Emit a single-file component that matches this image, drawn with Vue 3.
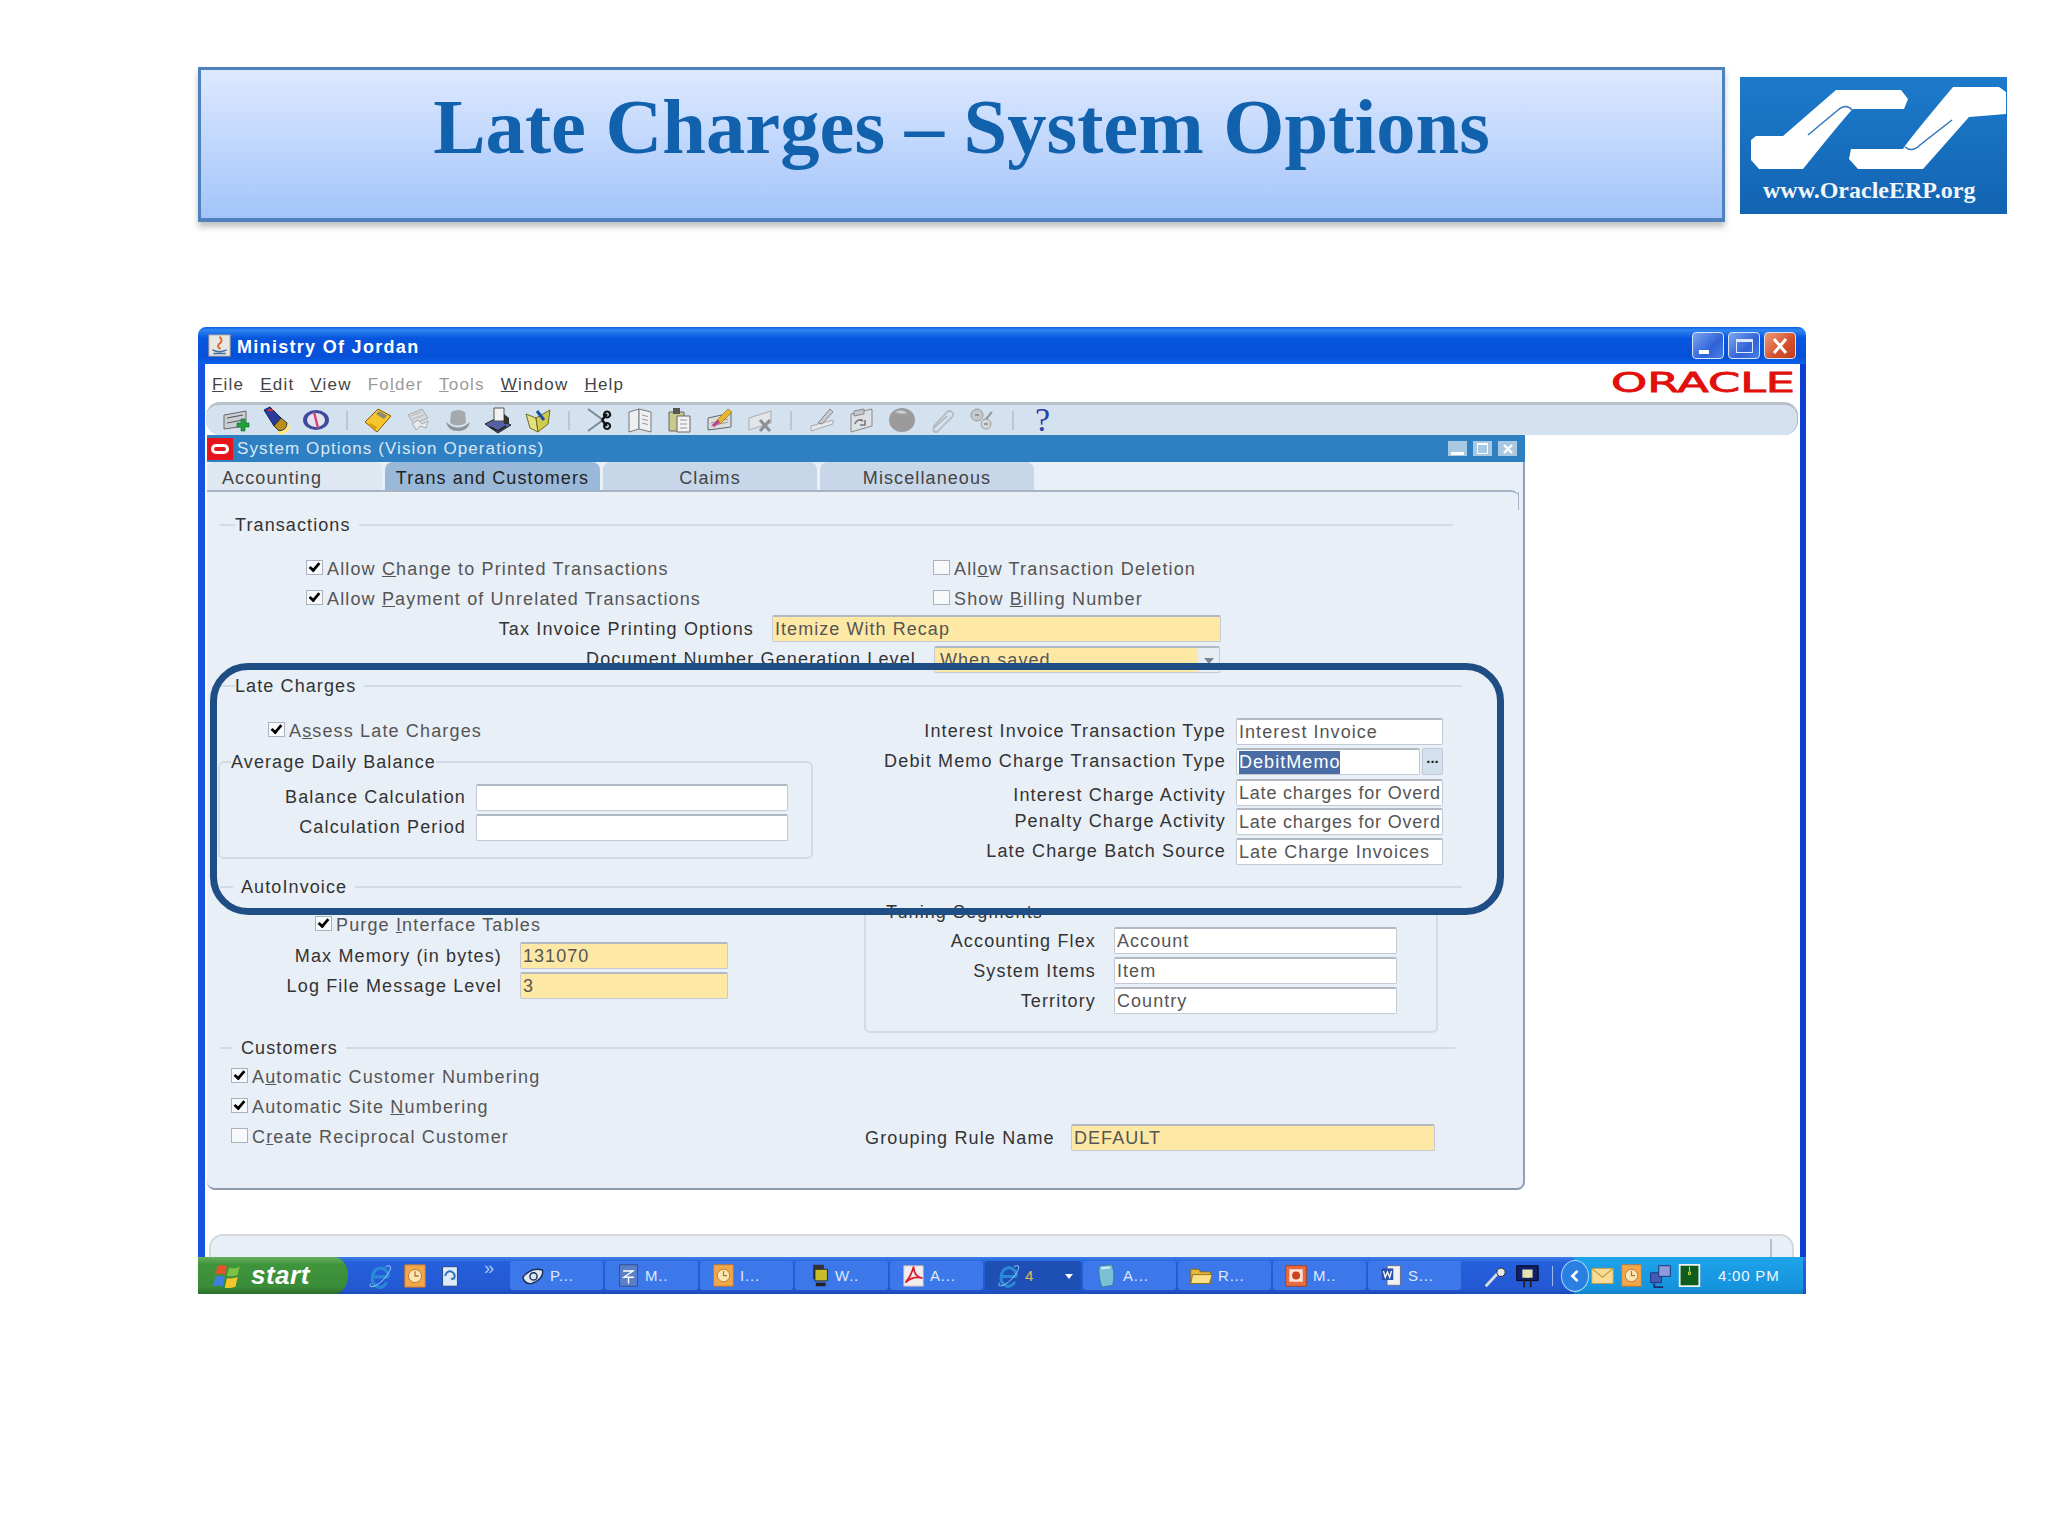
<script setup>
const icons = {
  add: [
    { d: 'M2 9L24 5V20L2 23Z', f: '#c9ced4', s: '#666' },
    { d: 'M5 12L21 9M5 17L21 14', s: '#555' },
    { d: 'M19 13h4v4h4v4h-4v4h-4v-4h-4v-4h4z', f: '#1fa33c', s: '#0c6a22', w: 0.6 },
  ],
  flash: [
    { d: 'M2 4L8 1L19 12L12 20Z', f: '#2a3c98', s: '#15205c' },
    { d: 'M6 4L11 4', s: '#c33', w: 2 },
    { d: 'M12 20L19 12L25 17Q25 24 17 25Z', f: '#b98f1a', s: '#333' },
    { d: 'M16 27Q25 27 27 19', s: '#ffe97a', w: 3 },
  ],
  compass: [
    { d: 'M1 14a13 10 0 1 0 26 0a13 10 0 1 0 -26 0Z', f: '#3d4a9e' },
    { d: 'M5 14a9 7 0 1 0 18 0a9 7 0 1 0 -18 0Z', f: '#e7e3ee' },
    { d: 'M12 6L16 22', s: '#d0457a', w: 2.5 },
  ],
  save: [
    { d: 'M1 16L14 3L27 10L13 26Z', f: '#f7c52e', s: '#7a5a08' },
    { d: 'M15 5L23 9.5L20 13L12 8Z', f: '#8f8a72' },
    { d: 'M6 17L13 21L11 24L4 19Z', f: '#d79b12' },
  ],
  star: [
    { d: 'M4 9L18 3L24 12L10 18Z', f: '#d5d8dc', s: '#aaa' },
    { d: 'M8 18L14 14L18 18L24 15L22 22L16 20L12 24L10 20Z', f: '#e8eaec', s: '#aaa' },
    { d: 'M7 10L17 6M9 13L20 9', s: '#b5b8bc' },
  ],
  hat: [
    { d: 'M7 6Q14 2 21 6L22 17Q14 22 6 17Z', f: '#a5a8ac' },
    { d: 'M2 16Q14 27 26 16Q24 25 14 25Q4 25 2 16Z', f: '#8f9296' },
  ],
  printer: [
    { d: 'M1 18L13 12L27 19L14 27Z', f: '#5660a8', s: '#222' },
    { d: 'M10 2H20V15H10Z', f: '#f2f2f2', s: '#555' },
    { d: 'M20 8L25 12V18H20Z', f: '#333' },
    { d: 'M6 21L14 25L22 20', s: '#222', w: 1.5 },
  ],
  folder: [
    { d: 'M2 8L12 12L14 26L6 22Z', f: '#e5e07f', s: '#6b6a20' },
    { d: 'M12 12L26 4L24 18L14 26Z', f: '#cfcb4e', s: '#6b6a20' },
    { d: 'M13 5L20 14', s: '#1d4fa0', w: 3 },
  ],
  scissors: [
    { d: 'M2 3L17 14M2 25L17 14', s: '#7d8892', w: 2 },
    { d: 'M16 14L21 8M16 14L21 20', s: '#111', w: 2.5 },
    { d: 'M21 5.500a3 3 0 1 0 .1 0ZM21 17a3 3 0 1 0 .1 0Z', s: '#111', w: 2.2 },
  ],
  copy: [
    { d: 'M3 6L13 3V23L3 26Z', f: '#eef0f2', s: '#777' },
    { d: 'M13 3L25 6V26L13 23Z', f: '#eef0f2', s: '#777' },
    { d: 'M16 9L22 10.500M16 13L22 14.500M16 17L22 18.500', s: '#999' },
  ],
  paste: [
    { d: 'M3 6H18V25H3Z', f: '#c9c98a', s: '#666' },
    { d: 'M7 2H14V8H7Z', f: '#555' },
    { d: 'M11 10H24V26H11Z', f: '#f3f3f3', s: '#666' },
    { d: 'M14 14H21M14 18H21M14 22H21', s: '#999' },
  ],
  clear: [
    { d: 'M2 12L25 7V21L2 24Z', f: '#ddd', s: '#666' },
    { d: 'M5 17L22 13M5 20L22 16', s: '#999' },
    { d: 'M10 15L22 3L26 6L14 18Z', f: '#e6b72b', s: '#8a6a10', w: 0.6 },
    { d: 'M7 20L13 15', s: '#c0408a', w: 3 },
  ],
  remove: [
    { d: 'M3 12L25 5V17L3 24Z', f: '#e3e5e8', s: '#aaa' },
    { d: 'M14 14L24 25M24 14L14 25', s: '#8b8e92', w: 3 },
  ],
  pen: [
    { d: 'M3 20L25 14V18L3 25Z', f: '#e5e7ea', s: '#aaa' },
    { d: 'M10 17L22 3L25 6L14 18Z', f: '#c8cbcf', s: '#888' },
  ],
  docs: [
    { d: 'M3 8L24 3V20L3 26Z', f: '#dde0e4', s: '#888' },
    { d: 'M6 5L16 3V8L6 10Z', f: '#c4c7cb', s: '#888' },
    { d: 'M7 18a5 5 0 0 1 8 -3M17 14V19H12', s: '#777', w: 1.6 },
  ],
  ball: [
    { d: 'M1 14a13 12 0 1 0 26 0a13 12 0 1 0 -26 0Z', f: '#9b9b9b' },
    { d: 'M7 6Q14 2 19 7Q13 9 7 6Z', f: '#cfcfcf' },
  ],
  clip: [
    { d: 'M5 21L19 6a3.500 3.500 0 0 1 5 5L10 25a2.500 2.500 0 0 1 -4 -3L19 10', s: '#b4b8bc', w: 1.7 },
  ],
  gears: [
    { d: 'M3 9a6 6 0 1 0 12 0a6 6 0 1 0 -12 0Z', f: '#c6c9cc', s: '#999' },
    { d: 'M13 18a5 5 0 1 0 10 0a5 5 0 1 0 -10 0Z', f: '#d6d8da', s: '#999' },
    { d: 'M7 9h4M16 18h4M18 13L24 6', s: '#999', w: 2 },
  ],
  ie: [
    { d: 'M23 15H6M6 15a8 9 0 0 1 17 0M6 15a8 9 0 0 0 15 6', s: '#2b8ad8', w: 3.4 },
    { d: 'M4 22Q1 27 8 25Q20 19 25 7Q27 1 20 4', s: '#9ad2f4', w: 1 },
  ],
  clock: [
    { d: 'M3 2H25V26H3Z', f: '#f2a84a', s: '#c9742a' },
    { d: 'M7 14a7 7 0 1 0 14 0a7 7 0 1 0 -14 0Z', f: '#fbe7b6', s: '#b9732a' },
    { d: 'M14 9V14H18', s: '#b9732a', w: 1.4 },
  ],
  mailIe: [
    { d: 'M6 4H22V25H6Z', f: '#dfeaf8', s: '#20407f' },
    { d: 'M9 14a5 5 0 1 1 9 3h-3', s: '#2c6fc2', w: 2.2 },
  ],
  eyeLink: [
    { d: 'M2 16Q12 4 24 8Q26 18 12 23Q4 24 2 16Z', f: '#dfe7f3', s: '#1b2c58', w: 1.6 },
    { d: 'M10 15a4 4 0 1 0 8 0a4 4 0 1 0 -8 0Z', s: '#1b2c58', w: 1.6 },
  ],
  chat: [
    { d: 'M4 2H24V26H4Z', f: '#5d7fc8', s: '#2e4a8e' },
    { d: 'M8 9H19L9 16H20M14 16V23', s: '#fff', w: 1.6 },
  ],
  sql: [
    { d: 'M8 2H20V18H8Z', f: '#333' },
    { d: 'M10 7H24V20H10Z', f: '#c9bd2a', s: '#222' },
    { d: 'M11 22H22V26H11Z', f: '#222' },
  ],
  pdf: [
    { d: 'M3 3H25V26H3Z', f: '#f4eef0', s: '#b8a8b0' },
    { d: 'M14 4Q12 14 5 22Q14 14 24 17Q15 16 14 4Z', s: '#d4202a', w: 2 },
  ],
  note: [
    { d: 'M6 3L20 2Q24 12 21 25L9 27Q4 14 6 3Z', f: '#7cc0d8', s: '#2d7a98' },
    { d: 'M8 6L18 5', s: '#d8f0f8', w: 2 },
  ],
  dir: [
    { d: 'M2 7H11L13 10H24V23H2Z', f: '#e4b83c', s: '#8c6a10' },
    { d: 'M4 13H26L23 23H2Z', f: '#fbe08a', s: '#8c6a10' },
  ],
  ppt: [
    { d: 'M2 3H25V26H2Z', f: '#e86c40', s: '#a43c1c' },
    { d: 'M6 7H21V21H6Z', f: '#fbe2d4' },
    { d: 'M9 14a4.500 4.500 0 1 0 9 0a4.500 4.500 0 1 0 -9 0Z', f: '#c8431e' },
  ],
  word: [
    { d: 'M9 3H24V25H9Z', f: '#eef1f6', s: '#667' },
    { d: 'M3 6H16V19H3Z', f: '#2a50a8' },
    { d: 'M5 9L7 16L9.500 10L12 16L14 9', s: '#fff', w: 1.4 },
  ],
  mic: [
    { d: 'M4 25L17 11', s: '#d8dce2', w: 3 },
    { d: 'M16 10a4.500 4.500 0 1 0 9 0a4.500 4.500 0 1 0 -9 0Z', f: '#e8e8e8', s: '#222' },
  ],
  helpDesk: [
    { d: 'M3 3H26V19H3Z', f: '#10206c', s: '#000' },
    { d: 'M9 7H20V16H9Z', f: '#e7e2b2' },
    { d: 'M11 16V26M18 16V26', s: '#222', w: 2 },
  ],
  mail: [
    { d: 'M2 6H26V23H2Z', f: '#f6dc96', s: '#c19a3c' },
    { d: 'M2 6L14 16L26 6', s: '#c19a3c', w: 1.2 },
  ],
  net: [
    { d: 'M3 11H15V22H3Z', f: '#4659b4', s: '#1c2b70' },
    { d: 'M12 3H25V15H12Z', f: '#8d9bdc', s: '#1c2b70' },
    { d: 'M7 23V27H17', s: '#1c2b70', w: 2 },
  ],
  green: [
    { d: 'M3 2H25V26H3Z', f: '#0f5c1c', s: '#eef2f2', w: 2 },
    { d: 'M13 10h2v3h-2zM14 4V9', s: '#e6ee50', w: 1 },
  ],
}

const toolbar = [
  ['add', 'flash', 'compass'],
  ['save', 'star', 'hat', 'printer', 'folder'],
  ['scissors', 'copy', 'paste', 'clear', 'remove'],
  ['pen', 'docs', 'ball', 'clip', 'gears'],
]

const quick = ['ie', 'clock', 'mailIe']

const tasks = [
  { icon: 'eyeLink', label: 'P...' },
  { icon: 'chat', label: 'M..' },
  { icon: 'clock', label: 'I...' },
  { icon: 'sql', label: 'W..' },
  { icon: 'pdf', label: 'A...' },
  { icon: 'ie', label: '4', active: true },
  { icon: 'note', label: 'A...' },
  { icon: 'dir', label: 'R...' },
  { icon: 'ppt', label: 'M..' },
  { icon: 'word', label: 'S...' },
]

const tray = ['mail', 'clock', 'net', 'green']

const chargeRows = [
  { label: 'Interest Invoice Transaction Type', value: 'Interest Invoice' },
  { label: 'Debit Memo Charge Transaction Type', value: 'DebitMemo', lov: true },
  { label: 'Interest Charge Activity', value: 'Late charges for Overd', low: true, tight: true },
  { label: 'Penalty Charge Activity', value: 'Late charges for Overd', tight: true },
  { label: 'Late Charge Batch Source', value: 'Late Charge Invoices' },
]

const tuningRows = [
  { label: 'Accounting Flex', value: 'Account' },
  { label: 'System Items', value: 'Item' },
  { label: 'Territory', value: 'Country' },
]
</script>

<template>
  <div class="page">
    <header class="slide-head">
      <div class="title-box">
        <h1>Late Charges – System Options</h1>
      </div>
      <div class="logo">
        <svg width="267" height="137" viewBox="0 0 267 137">
          <path d="M11 63L16 59H43L96 13H161L168 22L164 32H113Q108 36 63 92H19L11 83Z" fill="#fff" />
          <path d="M68 58L98 33Q106 26 112 33" fill="none" stroke="#2f76bd" stroke-width="1.5" />
          <path d="M213 10H259L266 15V37L229 40L183 92H118L109 82L111 72H163Q166 66 213 10Z" fill="#fff" />
          <path d="M212 43L180 68Q172 76 165 70" fill="none" stroke="#2f76bd" stroke-width="1.5" />
          <text x="23" y="121" class="logo-text">www.OracleERP.org</text>
        </svg>
      </div>
    </header>

    <div class="window">
      <div class="titlebar">
        <svg class="java" width="25" height="25" viewBox="0 0 28 28">
          <path d="M2 2H26V26H2Z" fill="#e8e6e0" stroke="#8d8d8d" />
          <path d="M14 4Q19 9 13 13Q11 15 15 18" fill="none" stroke="#d9621e" stroke-width="2" />
          <path d="M6 19Q14 23 22 19M7 23H21" fill="none" stroke="#3f6fa8" stroke-width="1.6" />
        </svg>
        <span class="win-title">Ministry Of Jordan</span>
        <div class="win-buttons">
          <span class="win-btn"><i class="glyph-min" /></span>
          <span class="win-btn"><i class="glyph-max" /></span>
          <span class="win-btn close">
            <svg width="20" height="20" viewBox="0 0 20 20"><path d="M4 3L16 17M16 3L4 17" stroke="#fff" stroke-width="3" /></svg>
          </span>
        </div>
      </div>

      <div class="win-body">
        <div class="menubar">
          <nav class="menus">
            <span><u>F</u>ile</span>
            <span><u>E</u>dit</span>
            <span><u>V</u>iew</span>
            <span class="off">Fo<u>l</u>der</span>
            <span class="off"><u>T</u>ools</span>
            <span><u>W</u>indow</span>
            <span><u>H</u>elp</span>
          </nav>
          <span class="oracle">ORACLE</span>
        </div>

        <div class="toolbar">
          <template v-for="(group, i) in toolbar" :key="i">
            <svg v-for="name in group" :key="name" class="tool" width="28" height="28" viewBox="0 0 28 28">
              <path
                v-for="(p, n) in icons[name]"
                :key="n"
                :d="p.d"
                :fill="p.f || 'none'"
                :stroke="p.s || 'none'"
                :stroke-width="p.w || 1"
              />
            </svg>
            <i class="tool-sep" />
          </template>
          <span class="tool-help">?</span>
        </div>

        <div class="subwindow">
          <div class="sub-title">
            <span class="ora-icon"><i /></span>
            <span class="sub-text">System Options (Vision Operations)</span>
            <div class="sub-buttons">
              <span class="sub-btn"><i class="s-min" /></span>
              <span class="sub-btn"><i class="s-max" /></span>
              <span class="sub-btn">
                <svg width="14" height="14" viewBox="0 0 14 14"><path d="M3 3L11 11M11 3L3 11" stroke="#fff" stroke-width="2.4" /></svg>
              </span>
            </div>
          </div>

          <div class="panel">
            <div class="tabs">
              <span class="tab first">Accounting</span>
              <span class="tab current">Trans and Customers</span>
              <span class="tab">Claims</span>
              <span class="tab">Miscellaneous</span>
            </div>

            <div class="sheet">
              <div class="legend legend-tx"><span>Transactions</span></div>

              <div class="check-grid">
                <label class="check"><i class="box on" /><span>Allow <u>C</u>hange to Printed Transactions</span></label>
                <label class="check"><i class="box" /><span>All<u>o</u>w Transaction Deletion</span></label>
                <label class="check"><i class="box on" /><span>Allow <u>P</u>ayment of Unrelated Transactions</span></label>
                <label class="check"><i class="box" /><span>Show <u>B</u>illing Number</span></label>
              </div>

              <div class="frow tax-row nudge">
                <span class="lbl">Tax Invoice Printing Options</span>
                <div class="field req">Itemize With Recap</div>
              </div>
              <div class="frow doc-row">
                <span class="lbl">Document Number Generation Level</span>
                <div class="field select">
                  <span class="select-text">When saved</span>
                  <span class="select-arrow" />
                </div>
              </div>

              <div class="legend legend-late"><span>Late Charges</span></div>

              <div class="late-grid">
                <div class="late-left">
                  <label class="check assess"><i class="box on" /><span>A<u>s</u>sess Late Charges</span></label>
                  <fieldset class="group adb">
                    <legend>Average Daily Balance</legend>
                    <div class="frow adb-row">
                      <span class="lbl">Balance Calculation</span>
                      <div class="field" />
                    </div>
                    <div class="frow adb-row">
                      <span class="lbl">Calculation Period</span>
                      <div class="field" />
                    </div>
                  </fieldset>
                </div>
                <div class="late-right">
                  <div v-for="row in chargeRows" :key="row.label" class="frow charge-row">
                    <span class="lbl" :class="{ low: row.low }">{{ row.label }}</span>
                    <div v-if="row.lov" class="lov">
                      <div class="field"><span class="selected">{{ row.value }}</span></div>
                      <span class="lov-btn">...</span>
                    </div>
                    <div v-else class="field" :class="{ tight: row.tight }">{{ row.value }}</div>
                  </div>
                </div>
              </div>

              <div class="legend indent legend-auto"><span>AutoInvoice</span></div>

              <div class="auto-grid">
                <div class="auto-left">
                  <label class="check purge"><i class="box on" /><span>Purge <u>I</u>nterface Tables</span></label>
                  <div class="frow memory-row nudge">
                    <span class="lbl">Max Memory (in bytes)</span>
                    <div class="field req">131070</div>
                  </div>
                  <div class="frow memory-row nudge">
                    <span class="lbl">Log File Message Level</span>
                    <div class="field req">3</div>
                  </div>
                </div>
                <fieldset class="group tuning">
                  <legend>Tuning Segments</legend>
                  <div v-for="row in tuningRows" :key="row.label" class="frow tuning-row nudge">
                    <span class="lbl">{{ row.label }}</span>
                    <div class="field">{{ row.value }}</div>
                  </div>
                </fieldset>
              </div>

              <div class="legend indent legend-cust"><span>Customers</span></div>

              <div class="cust">
                <label class="check"><i class="box on" /><span>A<u>u</u>tomatic Customer Numbering</span></label>
                <label class="check"><i class="box on" /><span>Automatic Site <u>N</u>umbering</span></label>
                <div class="cust-last nudge">
                  <label class="check"><i class="box" /><span>C<u>r</u>eate Reciprocal Customer</span></label>
                  <span class="lbl grouping">Grouping Rule Name</span>
                  <div class="field req">DEFAULT</div>
                </div>
              </div>
            </div>
          </div>
        </div>

        <div class="strip"><i /></div>
      </div>

      <div class="taskbar">
        <div class="start">
          <svg width="32" height="32" viewBox="0 0 30 30">
            <path d="M5 6Q9 3 14 6L12 14Q8 12 3 14Z" fill="#e2552a" />
            <path d="M16 7Q21 9 26 6L24 14Q19 16 14 15Z" fill="#7cc242" />
            <path d="M3 16Q8 14 12 16L10 25Q6 23 1 25Z" fill="#3f7fe0" />
            <path d="M14 17Q19 18 24 16L22 25Q17 27 12 26Z" fill="#f7c62e" />
          </svg>
          <span>start</span>
        </div>
        <div class="quick">
          <svg v-for="name in quick" :key="name" width="26" height="26" viewBox="0 0 28 28">
            <path
              v-for="(p, n) in icons[name]"
              :key="n"
              :d="p.d"
              :fill="p.f || 'none'"
              :stroke="p.s || 'none'"
              :stroke-width="p.w || 1"
            />
          </svg>
          <span class="more">»</span>
        </div>
        <div class="tasks">
          <div v-for="(t, i) in tasks" :key="i" class="task" :class="{ active: t.active }">
            <svg width="25" height="25" viewBox="0 0 28 28">
              <path
                v-for="(p, n) in icons[t.icon]"
                :key="n"
                :d="p.d"
                :fill="p.f || 'none'"
                :stroke="p.s || 'none'"
                :stroke-width="p.w || 1"
              />
            </svg>
            <span>{{ t.label }}</span>
            <i v-if="t.active" class="task-arrow" />
          </div>
        </div>
        <div class="sys-icons">
          <svg v-for="name in ['mic', 'helpDesk']" :key="name" width="26" height="26" viewBox="0 0 28 28">
            <path
              v-for="(p, n) in icons[name]"
              :key="n"
              :d="p.d"
              :fill="p.f || 'none'"
              :stroke="p.s || 'none'"
              :stroke-width="p.w || 1"
            />
          </svg>
          <i class="sys-sep" />
        </div>
        <div class="tray">
          <span class="tray-chevron">
            <svg width="24" height="24" viewBox="0 0 28 28"><path d="M17 8L11 14L17 20" fill="none" stroke="#fff" stroke-width="3.200" /></svg>
          </span>
          <svg v-for="name in tray" :key="name" width="25" height="25" viewBox="0 0 28 28">
            <path
              v-for="(p, n) in icons[name]"
              :key="n"
              :d="p.d"
              :fill="p.f || 'none'"
              :stroke="p.s || 'none'"
              :stroke-width="p.w || 1"
            />
          </svg>
          <span class="time">4:00 PM</span>
        </div>
      </div>
    </div>

    <!-- highlight drawn on the slide, sits on top of the screenshot -->
    <div class="highlight" />
  </div>
</template>

<style>
html, body { margin: 0; background: #fff; }
</style>

<style scoped>
.page {
  position: relative;
  width: 2048px;
  height: 1536px;
  overflow: hidden;
  background: #fff;
  font-family: "Liberation Sans", Arial, sans-serif;
}

/* slide header */
.slide-head {
  display: flex;
  gap: 15px;
  padding: 67px 0 0 198px;
}
.title-box {
  box-sizing: border-box;
  width: 1527px;
  height: 155px;
  border: 3px solid #4f81bd;
  border-bottom-width: 4px;
  background: linear-gradient(#dde9ff, #a3c4fa);
  box-shadow: 0 5px 6px rgba(80, 80, 80, 0.35);
  text-align: center;
}
.title-box h1 {
  margin: 0;
  padding-top: 10px;
  font: bold 78.600px/1.2 "Liberation Serif", "Times New Roman", serif;
  color: #1261ad;
}
.logo {
  width: 267px;
  height: 137px;
  margin-top: 10px;
  background: linear-gradient(#1d7acb, #1364b2);
}
.logo-text {
  font: bold 24px "Liberation Serif", serif;
  fill: #f1f6fb;
}

/* XP window */
.window {
  display: flex;
  flex-direction: column;
  width: 1608px;
  height: 967px;
  margin: 105px 0 0 198px;
  color: #333;
  font-size: 18px;
  letter-spacing: 1.150px;
}
.titlebar {
  display: flex;
  align-items: center;
  flex: none;
  height: 37px;
  padding: 0 10px 0 9px;
  border-radius: 8px 8px 0 0;
  background: linear-gradient(#0a5ce4 0, #2f86f2 8%, #0755df 30%, #0650d8 80%, #0a62ea);
}
.java { margin-right: 5px; }
.win-title {
  padding-top: 4px;
  color: #fff;
  font-weight: bold;
  font-size: 18px;
  letter-spacing: 1.300px;
}
.win-buttons {
  display: flex;
  gap: 4px;
  margin-left: auto;
}
.win-btn {
  display: flex;
  width: 32px;
  height: 27px;
  box-sizing: border-box;
  align-items: center;
  justify-content: center;
  border: 1px solid #d8e4f8;
  border-radius: 4px;
  background: linear-gradient(135deg, #7da6ee, #2f62d8 60%, #4a7ee4);
}
.win-btn.close { background: linear-gradient(135deg, #ee9a7a, #d4502a 60%, #c23e1c); }
.glyph-min {
  width: 10px;
  height: 4px;
  margin: 12px 8px 0 0;
  background: #fff;
}
.glyph-max {
  width: 17px;
  height: 14px;
  box-sizing: border-box;
  border: 1px solid #dce8fb;
  border-top-width: 3px;
}

.win-body {
  display: flex;
  flex-direction: column;
  flex: 1;
  min-height: 0;
  border-left: 7px solid #1453e4;
  border-right: 6px solid #0b3fd2;
  background: #fff;
}
.menubar {
  display: flex;
  flex: none;
  align-items: center;
  justify-content: space-between;
  height: 38px;
  padding: 0 6px 0 7px;
}
.menus {
  display: flex;
  gap: 16px;
  padding-top: 3px;
  color: #444;
  font-size: 17px;
  letter-spacing: 1.200px;
}
.menus .off { color: #9a9a9a; }
.oracle {
  display: inline-block;
  width: 183px;
  color: #e2100c;
  font: 26px/1 "DejaVu Sans", sans-serif;
  letter-spacing: 0;
  -webkit-text-stroke: 0.8px #e2100c;
  transform: scaleX(1.770);
  transform-origin: left center;
}

.toolbar {
  display: flex;
  flex: none;
  align-items: center;
  box-sizing: border-box;
  height: 33px;
  margin: 0 2px 0 1px;
  padding-left: 10px;
  border-top: 3px solid #b9c1c8;
  border-right: 1px solid #aab4c0;
  border-radius: 14px;
  background: #d4e2ef;
}
.tool { margin: 0 6px; flex: none; }
.tool-sep {
  flex: none;
  width: 2px;
  height: 19px;
  margin: 0 10px;
  background: #bdc6cf;
}
.tool-help {
  width: 20px;
  margin-left: 11px;
  color: #2b3fa8;
  font: 34px "Liberation Serif", serif;
  line-height: 1;
}

/* inner forms window */
.subwindow {
  flex: none;
  width: 1318px;
  margin-left: 2px;
}
.sub-title {
  display: flex;
  align-items: center;
  height: 27px;
  background: #2f80c2;
}
.ora-icon {
  display: flex;
  align-items: center;
  justify-content: center;
  width: 26px;
  height: 22px;
  background: #e8141c;
}
.ora-icon i {
  width: 18px;
  height: 10px;
  box-sizing: border-box;
  border: 3px solid #fff;
  border-radius: 6px;
}
.sub-text {
  margin-left: 4px;
  color: #dbe7f3;
  font-size: 17px;
  letter-spacing: 1.100px;
}
.sub-buttons {
  display: flex;
  gap: 6px;
  margin-left: auto;
  margin-right: 8px;
}
.sub-btn {
  display: flex;
  width: 19px;
  height: 15px;
  align-items: center;
  justify-content: center;
  background: #a9c8e2;
}
.s-min {
  width: 13px;
  height: 3px;
  margin-top: 9px;
  background: #fff;
}
.s-max {
  width: 9px;
  height: 8px;
  border: 1px solid #fff;
  border-top-width: 2px;
}

.panel {
  box-sizing: border-box;
  height: 728px;
  border-right: 2px solid #8ea0ba;
  border-bottom: 2px solid #8f9aae;
  border-bottom-left-radius: 8px;
  border-bottom-right-radius: 8px;
  background: #e9eff7;
}
.tabs {
  display: flex;
  gap: 3px;
  height: 28px;
}
.tab {
  flex: none;
  width: 214px;
  height: 28px;
  line-height: 32px;
  border-radius: 8px 8px 0 0;
  background: #c7d6e8;
  color: #444;
  text-align: center;
  letter-spacing: 1.100px;
}
.tab.first {
  width: 175px;
  padding-left: 15px;
  box-sizing: border-box;
  text-align: left;
  background: #dfe7f1;
}
.tab.current {
  width: 215px;
  background: #9ab9d8;
  color: #222;
}
.sheet {
  position: relative;
  box-sizing: border-box;
  height: 698px;
  margin-right: 4px;
  padding-left: 11px;
  border-top: 2px solid #a6b3c5;
  border-top-right-radius: 8px;
}
.sheet::after {
  content: "";
  position: absolute;
  top: 0;
  right: 0;
  height: 18px;
  border-right: 1px solid #a6b3c5;
}

.legend {
  display: flex;
  align-items: center;
  box-sizing: border-box;
  height: 20px;
  margin-left: 2px;
  width: 1242px;
  letter-spacing: 1.100px;
}
.legend::before,
.legend::after {
  content: "";
  height: 2px;
  background: #d3dae3;
}
.legend::before { width: 15px; flex: none; }
.legend::after { flex: 1; margin-left: 8px; }
.legend.indent::before { width: 13px; margin-right: 8px; }
.legend span { color: #333; }
.legend-tx { margin-top: 23px; width: 1233px; }
.legend-late { margin-top: 3px; }
.legend-auto { margin-top: 12px; }
.legend-cust { margin-top: 5px; width: 1235px; }

.check {
  display: flex;
  align-items: center;
  height: 30px;
  color: #555;
}
.box {
  position: relative;
  flex: none;
  box-sizing: border-box;
  width: 17px;
  height: 15px;
  margin: -4px 4px 0 0;
  border: 1px solid #aab2bf;
  background: #f7f9fb;
}
.box.on::after {
  content: "";
  position: absolute;
  left: 4px;
  top: -1px;
  width: 4px;
  height: 9px;
  border: solid #000;
  border-width: 0 3px 3px 0;
  box-sizing: content-box;
  transform: rotate(40deg) scale(0.9);
}

.check-grid {
  display: grid;
  grid-template-columns: 627px 1fr;
  margin-top: 19px;
  padding-left: 88px;
}

.frow {
  display: grid;
  column-gap: 18px;
  height: 27px;
  align-items: center;
}
.lbl {
  color: #333;
  text-align: right;
  white-space: nowrap;
}
.lbl.low { padding-top: 7px; }
.nudge > .lbl { padding-top: 2px; }
.field {
  box-sizing: border-box;
  height: 27px;
  padding: 0 0 0 2px;
  overflow: hidden;
  border: 1px solid #c3cad5;
  border-top: 2px solid #b3b9c3;
  border-radius: 2px;
  background: #fff;
  color: #555;
  line-height: 25px;
  letter-spacing: 1.050px;
  white-space: nowrap;
}
.field.tight { letter-spacing: 0.800px; }
.field.req { background: #fee8a6; }

.tax-row {
  grid-template-columns: 536px 449px;
  margin-top: 1px;
}
.doc-row {
  grid-template-columns: 698px 286px;
  margin-top: 4px;
}
.select {
  display: flex;
  padding: 0;
  background: #e8edf4;
}
.select-text {
  flex: 1;
  padding-left: 5px;
  background: #fee8a6;
}
.select-arrow {
  position: relative;
  width: 21px;
}
.select-arrow::after {
  content: "";
  position: absolute;
  top: 10px;
  left: 6px;
  border: 5px solid transparent;
  border-top: 6px solid #7a8797;
}

.late-grid {
  display: grid;
  grid-template-columns: 595px 563px;
  column-gap: 67px;
  margin-top: 22px;
}
.assess {
  height: 27px;
  padding-left: 50px;
}
.group {
  margin: 0;
  padding: 0;
  border: 2px solid #d3dae3;
  border-radius: 6px;
  min-width: 0;
}
.group legend {
  height: 20px;
  padding: 0;
  line-height: 20px;
  color: #333;
  letter-spacing: 1.100px;
}
.adb {
  box-sizing: border-box;
  height: 107px;
  margin-top: 7px;
  padding-top: 12px;
}
.adb legend { margin-left: 11px; }
.adb-row {
  grid-template-columns: 246px 312px;
  column-gap: 10px;
  margin-bottom: 3px;
}
.late-right {
  display: grid;
  grid-auto-rows: 27px;
  row-gap: 3px;
}
.charge-row {
  grid-template-columns: 346px 207px;
  column-gap: 10px;
}
.lov {
  display: flex;
  gap: 2px;
}
.lov .field { width: 184px; }
.lov-btn {
  flex: 1;
  height: 27px;
  box-sizing: border-box;
  border: 1px solid #c3cad5;
  border-radius: 2px;
  background: #d3e0ee;
  color: #222;
  font: bold 15px/18px "Liberation Sans", sans-serif;
  letter-spacing: 0;
  text-align: center;
}
.selected {
  background: #4a6ca4;
  color: #fff;
  display: inline-block;
  line-height: 23px;
}

.auto-grid {
  display: grid;
  grid-template-columns: 646px 574px;
  margin-top: 5px;
}
.auto-left {
  display: grid;
  grid-auto-rows: 27px;
  row-gap: 3px;
  padding-top: 10px;
}
.purge {
  height: 27px;
  padding-left: 97px;
}
.memory-row { grid-template-columns: 284px 208px; }
.tuning {
  box-sizing: border-box;
  height: 131px;
  padding-top: 5px;
}
.tuning legend { margin-left: 20px; }
.tuning-row {
  grid-template-columns: 230px 283px;
  column-gap: 18px;
  margin-bottom: 3px;
}

.cust {
  margin-top: 4px;
  padding-left: 13px;
}
.cust-last { display: flex; align-items: center; }
.cust-last .check { width: 634px; flex: none; }
.grouping { width: 189px; margin-right: 17px; text-align: left; }
.cust-last .field { width: 364px; }

.strip {
  position: relative;
  box-sizing: border-box;
  flex: none;
  height: 23px;
  margin: auto 6px 0 4px;
  border: 2px solid #d4d9e0;
  border-bottom: 0;
  border-radius: 14px 14px 0 0;
  background: #e9eff7;
}
.strip i {
  position: absolute;
  top: 3px;
  bottom: 0;
  right: 20px;
  border-right: 2px solid #b8bfc8;
}

/* XP taskbar */
.taskbar {
  display: flex;
  flex: none;
  align-items: center;
  height: 37px;
  background: linear-gradient(#3a7fe6, #2560dc 15%, #2358d2 85%, #1d4ab8);
  color: #dfe9fb;
  font-size: 15px;
  letter-spacing: 0.8px;
}
.start {
  display: flex;
  flex: none;
  align-items: center;
  gap: 7px;
  box-sizing: border-box;
  width: 150px;
  height: 37px;
  padding-left: 14px;
  border-radius: 0 14px 14px 0 / 0 18px 18px 0;
  background: linear-gradient(#6aae5e, #3f953c 20%, #3a8c38 80%, #2c6e2a);
  color: #fff;
  font: italic bold 26px "Liberation Sans", sans-serif;
  letter-spacing: 0.5px;
}
.quick {
  display: flex;
  flex: none;
  align-items: center;
  gap: 9px;
  box-sizing: border-box;
  width: 162px;
  padding-left: 19px;
}
.more {
  margin: -14px 0 0 12px;
  color: #aac6f4;
  font-size: 18px;
}
.tasks {
  display: flex;
  flex: none;
  gap: 2px;
}
.task {
  position: relative;
  display: flex;
  align-items: center;
  gap: 4px;
  box-sizing: border-box;
  width: 93px;
  height: 29px;
  padding-left: 11px;
  border-radius: 3px;
  background: #3c78ea;
}
.task.active {
  width: 96px;
  background: #1e4fb5;
  color: #e5b75a;
}
.task-arrow {
  position: absolute;
  right: 8px;
  top: 13px;
  border: 4px solid transparent;
  border-top: 5px solid #fff;
}
.sys-icons {
  display: flex;
  flex: none;
  align-items: center;
  gap: 6px;
  width: 113px;
  padding-left: 21px;
  box-sizing: border-box;
}
.sys-sep {
  width: 1px;
  height: 20px;
  margin-left: 6px;
  background: #9db9ee;
}
.tray {
  display: flex;
  flex: none;
  align-items: center;
  gap: 4px;
  box-sizing: border-box;
  width: 229px;
  height: 37px;
  background: linear-gradient(#1ea4ea, #1593de 85%, #1280c8);
}
.tray-chevron {
  display: flex;
  align-items: center;
  justify-content: center;
  width: 26px;
  height: 30px;
  margin: 0 -3px 0 -13px;
  border: 1px solid #a8dcf7;
  border-radius: 50%;
  background: #2a7fe2;
}
.time {
  margin-left: 12px;
  color: #f2f8ff;
}

.highlight {
  position: absolute;
  left: 210px;
  top: 663px;
  box-sizing: border-box;
  width: 1294px;
  height: 252px;
  border: 7px solid #1f4e85;
  border-radius: 38px;
  pointer-events: none;
}
</style>
